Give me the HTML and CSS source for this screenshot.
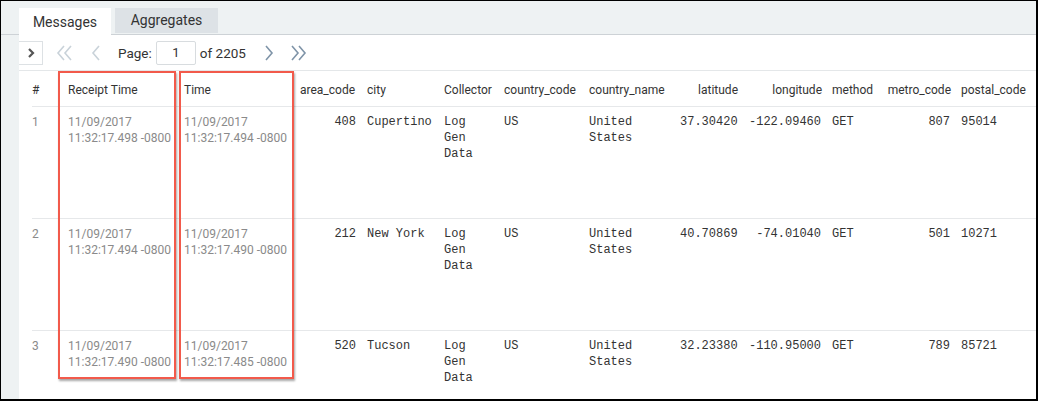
FILE: index.html
```html
<!DOCTYPE html>
<html>
<head>
<meta charset="utf-8">
<link rel="stylesheet" href="styles.css">
</head>
<body>
<div class="frame">
  <div class="tabs">
    <div class="tab active">Messages</div>
    <div class="tab">Aggregates</div>
  </div>
  <div class="main">
    <div class="strip"></div>
    <div class="panel">
      <div class="pager">
        <div class="toggle"><svg width="10" height="12" viewBox="0 0 10 12"><polyline points="3,2 7,6 3,10" fill="none" stroke="#555" stroke-width="2.2"/></svg></div>
        <svg class="ic first" width="18" height="16" viewBox="0 0 18 16"><polyline points="8,1 2,8 8,15" fill="none" stroke="#c9d2d9" stroke-width="1.6"/><polyline points="15,1 9,8 15,15" fill="none" stroke="#c9d2d9" stroke-width="1.6"/></svg>
        <svg class="ic prev" width="10" height="16" viewBox="0 0 10 16"><polyline points="8,1 2,8 8,15" fill="none" stroke="#c9d2d9" stroke-width="1.6"/></svg>
        <span class="lbl">Page:</span>
        <div class="pinput">1</div>
        <span class="lbl of">of 2205</span>
        <svg class="ic next" width="10" height="16" viewBox="0 0 10 16"><polyline points="2,1 8,8 2,15" fill="none" stroke="#7f94a8" stroke-width="1.6"/></svg>
        <svg class="ic last" width="18" height="16" viewBox="0 0 18 16"><polyline points="3,1 9,8 3,15" fill="none" stroke="#7f94a8" stroke-width="1.6"/><polyline points="10,1 16,8 10,15" fill="none" stroke="#7f94a8" stroke-width="1.6"/></svg>
      </div>
      <table class="grid">
        <colgroup>
          <col style="width:36px"><col style="width:116px"><col style="width:116px"><col style="width:67px"><col style="width:77px"><col style="width:60px"><col style="width:85px"><col style="width:91px"><col style="width:68px"><col style="width:84px"><col style="width:54px"><col style="width:75px"><col style="width:75px">
        </colgroup>
        <thead>
          <tr><th>#</th><th>Receipt Time</th><th>Time</th><th>area_code</th><th>city</th><th>Collector</th><th>country_code</th><th>country_name</th><th class="r">latitude</th><th class="r">longitude</th><th>method</th><th class="r">metro_code</th><th>postal_code</th></tr>
        </thead>
        <tbody>
          <tr><td class="g">1</td><td class="g">11/09/2017<br>11:32:17.498 -0800</td><td class="g">11/09/2017<br>11:32:17.494 -0800</td><td class="m r">408</td><td class="m">Cupertino</td><td class="m">Log<br>Gen<br>Data</td><td class="m">US</td><td class="m">United<br>States</td><td class="m r">37.30420</td><td class="m r">-122.09460</td><td class="m">GET</td><td class="m r">807</td><td class="m">95014</td></tr>
          <tr><td class="g">2</td><td class="g">11/09/2017<br>11:32:17.494 -0800</td><td class="g">11/09/2017<br>11:32:17.490 -0800</td><td class="m r">212</td><td class="m">New York</td><td class="m">Log<br>Gen<br>Data</td><td class="m">US</td><td class="m">United<br>States</td><td class="m r">40.70869</td><td class="m r">-74.01040</td><td class="m">GET</td><td class="m r">501</td><td class="m">10271</td></tr>
          <tr><td class="g">3</td><td class="g">11/09/2017<br>11:32:17.490 -0800</td><td class="g">11/09/2017<br>11:32:17.485 -0800</td><td class="m r">520</td><td class="m">Tucson</td><td class="m">Log<br>Gen<br>Data</td><td class="m">US</td><td class="m">United<br>States</td><td class="m r">32.23380</td><td class="m r">-110.95000</td><td class="m">GET</td><td class="m r">789</td><td class="m">85721</td></tr>
        </tbody>
      </table>
    </div>
  </div>
  <div class="hl hl-receipt"></div>
  <div class="hl hl-time"></div>
</div>
</body>
</html>
```

FILE: styles.css
```css
html, body {
  margin: 0;
  padding: 0;
  background: #fff;
}
.frame {
  position: relative;
  width: 1038px;
  height: 401px;
  box-sizing: border-box;
  border-top: 1px solid #000;
  border-left: 1px solid #000;
  border-right: 2px solid #000;
  border-bottom: 2px solid #000;
  background: #eef2f3;
  overflow: hidden;
  font-family: Roboto, "Liberation Sans", sans-serif;
  color: #333;
}
.tabs {
  display: flex;
  align-items: flex-start;
  gap: 4px;
  padding: 7px 0 0 18px;
  box-sizing: border-box;
  height: 34px;
  border-bottom: 1px solid #cdd2d6;
}
.tab {
  height: 25px;
  font-size: 14px;
  line-height: 25px;
  background: #dde2e6;
  color: #333;
  width: 103px;
  box-sizing: border-box;
  text-align: center;
}
.tab.active {
  background: #fff;
  height: 27px;
  line-height: 28px;
  width: 92px;
  margin-bottom: -1px;
}
.main {
  display: flex;
  height: 364px;
}
.strip {
  width: 18px;
  flex: none;
}
.panel {
  flex: 1;
  background: #fff;
}
.pager {
  display: flex;
  align-items: center;
  border-bottom: 1px solid #e4e7e9;
  box-sizing: border-box;
  height: 36px;
  font-size: 13px;
  color: #333;
}
.toggle {
  width: 24px;
  height: 24px;
  box-sizing: border-box;
  border: 1px solid #dde1e4;
  border-left: none;
  display: flex;
  align-items: center;
  justify-content: center;
  margin-top: 1px;
}
.ic { display: block; }
.first { margin-left: 13px; }
.prev { margin-left: 17px; }
.lbl { margin-left: 17px; font-size: 13.5px; }
.pinput {
  margin-left: 4px;
  width: 40px;
  height: 24px;
  box-sizing: border-box;
  border: 1px solid #d8dcdf;
  border-radius: 2px;
  text-align: center;
  line-height: 22px;
  font-size: 13px;
}
.lbl.of { margin-left: 4px; }
.next { margin-left: 18px; }
.last { margin-left: 15px; }
.grid {
  margin-left: 13px;
  border-collapse: collapse;
  table-layout: fixed;
  width: 1004px;
}
.grid th {
  height: 32px;
  font-weight: normal;
  font-size: 12px;
  text-align: left;
  color: #333;
  padding: 3px 0 0 0;
  border-bottom: 1px solid #e6e8ea;
  white-space: nowrap;
  vertical-align: middle;
}
.grid th.r { text-align: right; padding-right: 10px; }
.grid td {
  height: 112px;
  padding: 7px 0 0 0;
  vertical-align: top;
  font-size: 12px;
  line-height: 16px;
  border-bottom: 1px solid #e6e8ea;
  box-sizing: border-box;
  white-space: nowrap;
}
.grid td.g { color: #8a8a8a; }
.grid td.m {
  font-family: "Liberation Mono", "DejaVu Sans Mono", monospace;
  color: #333;
  font-size: 12px;
}
.grid td.r { text-align: right; padding-right: 11px; }
.hl {
  position: absolute;
  top: 70px;
  height: 308px;
  border: 2px solid #f25a4b;
  box-sizing: border-box;
  box-shadow: 1px 2px 2px rgba(0,0,0,0.35);
}
.hl-receipt { left: 57px; width: 118px; }
.hl-time { left: 178px; width: 115px; }
```
